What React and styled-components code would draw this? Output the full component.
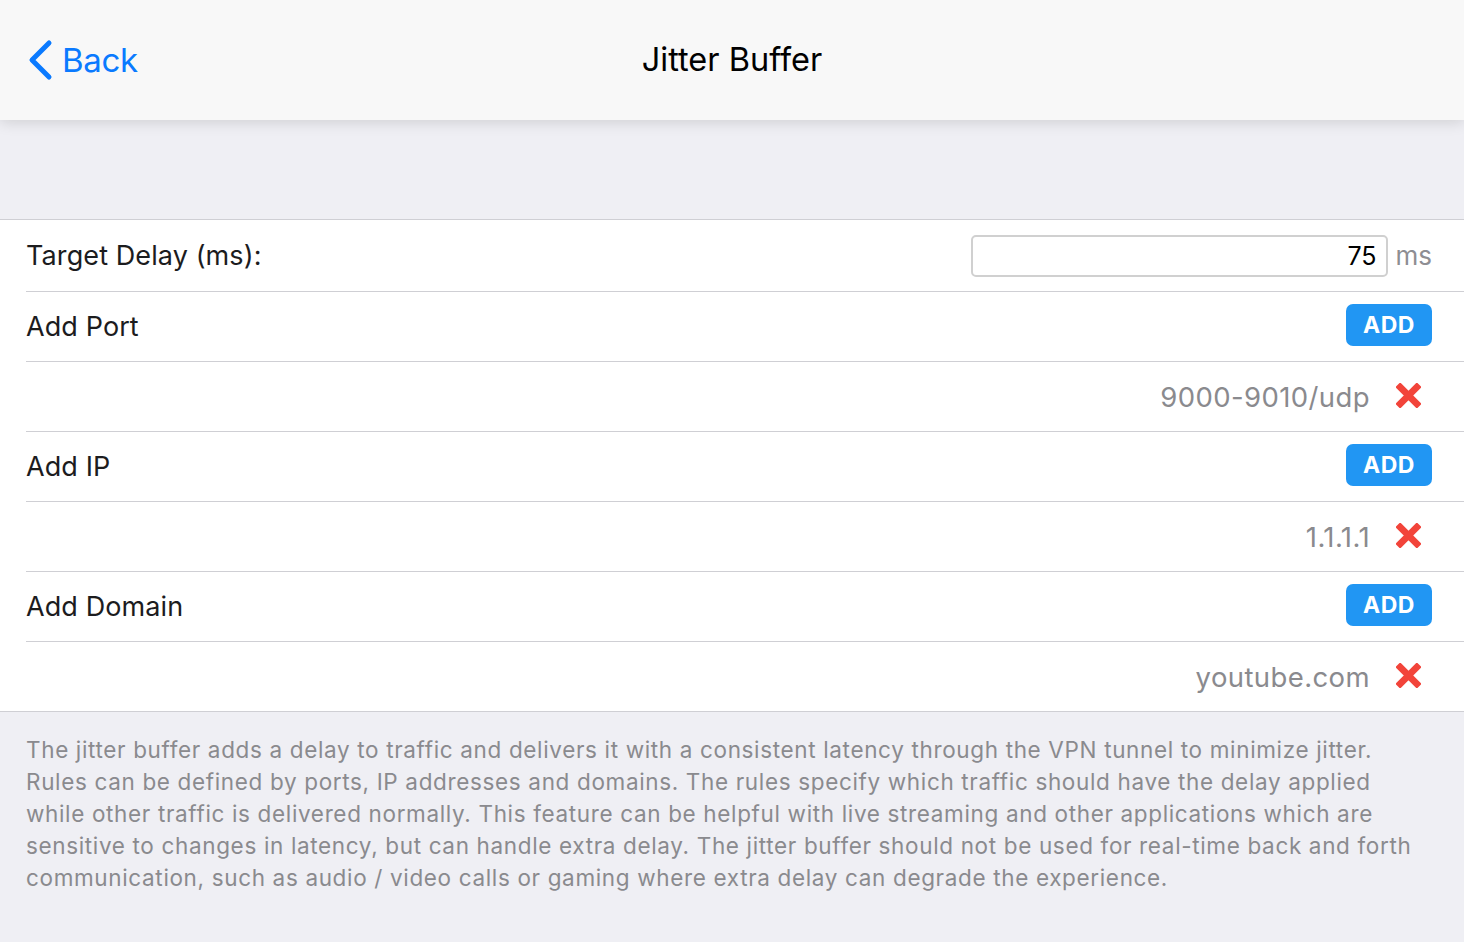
import React from 'react'
import styled, { createGlobalStyle } from 'styled-components'

const GlobalStyle = createGlobalStyle`
  html, body {
    margin: 0;
    padding: 0;
    background: #efeff4;
    font-family: Inter, "Liberation Sans", sans-serif;
    -webkit-font-smoothing: antialiased;
  }
`

const Page = styled.div`
  min-height: 942px;
  background: #efeff4;
`

const Header = styled.header`
  position: relative;
  z-index: 2;
  height: 120px;
  background: #f8f8f8;
  box-shadow: 0 2px 14px rgba(0, 0, 0, 0.14);
  display: grid;
  grid-template-columns: 1fr auto 1fr;
  align-items: center;
  padding: 0 26px;
`

const BackButton = styled.div`
  display: flex;
  align-items: center;
  gap: 8px;
  color: #0a7aff;
  font-size: 33px;
  font-weight: 400;
  letter-spacing: -0.3px;
`

const Title = styled.h1`
  margin: 0 0 2px;
  font-size: 32.5px;
  font-weight: 400;
  color: #000;
  letter-spacing: 0;
`

const Spacer = styled.div`
  height: 99px;
`

const List = styled.section`
  background: #fff;
  border-top: 1px solid #cfcfd4;
  border-bottom: 1px solid #cfcfd4;
`

const Row = styled.div`
  height: ${p => (p.first ? 71 : 69)}px;
  margin-left: 26px;
  padding-right: 32px;
  display: flex;
  align-items: center;
  justify-content: space-between;
  border-bottom: ${p => (p.last ? 'none' : '1px solid #cfcfd4')};
`

const Label = styled.span`
  font-size: 27px;
  color: #1c1c1e;
  letter-spacing: 0.1px;
  margin-top: -1px;
`

const InputGroup = styled.div`
  display: flex;
  align-items: center;
  gap: 8px;
`

const NumberBox = styled.div`
  box-sizing: border-box;
  width: 417px;
  height: 42px;
  border: 2px solid #d0d0d0;
  border-radius: 5px;
  display: flex;
  align-items: center;
  justify-content: flex-end;
  padding-right: 9px;
  font-size: 25px;
  color: #000;
`

const Unit = styled.span`
  font-size: 26px;
  color: #8e8e93;
`

const AddButton = styled.button`
  width: 86px;
  height: 42px;
  margin-top: -3px;
  border: none;
  border-radius: 7px;
  background: #2196f3;
  color: #fff;
  font-family: Inter, "Liberation Sans", sans-serif;
  font-size: 23px;
  font-weight: 700;
  letter-spacing: 0.5px;
  padding: 0;
`

const EntryRow = styled(Row)`
  justify-content: flex-end;
  gap: 26px;
  padding-right: 43px;
`

const Value = styled.span`
  font-size: 27.5px;
  color: #8a8a8e;
  letter-spacing: 0.4px;
`

const Remove = styled.svg`
  width: 25px;
  height: 25px;
  display: block;
  margin-top: -2px;
`

const Footer = styled.p`
  margin: 0;
  padding: 22px 10px 0 26px;
  font-size: 22.5px;
  line-height: 32px;
  color: #8a8a8e;
  letter-spacing: 0.65px;
`

const Cross = () => (
  <Remove viewBox="0 0 24 24">
    <path
      d="M4 4 L20 20 M20 4 L4 20"
      stroke="#f2443a"
      strokeWidth="6.5"
      strokeLinecap="square"
      fill="none"
    />
  </Remove>
)

const sections = [
  { label: 'Add Port', value: '9000-9010/udp' },
  { label: 'Add IP', value: '1.1.1.1' },
  { label: 'Add Domain', value: 'youtube.com' },
]

const footerLines = [
  'The jitter buffer adds a delay to traffic and delivers it with a consistent latency through the VPN tunnel to minimize jitter.',
  'Rules can be defined by ports, IP addresses and domains. The rules specify which traffic should have the delay applied',
  'while other traffic is delivered normally. This feature can be helpful with live streaming and other applications which are',
  'sensitive to changes in latency, but can handle extra delay. The jitter buffer should not be used for real-time back and forth',
  'communication, such as audio / video calls or gaming where extra delay can degrade the experience.',
]

export default function App() {
  return (
    <Page>
      <GlobalStyle />
      <Header>
        <BackButton>
          <svg width="28" height="42" viewBox="0 0 28 42">
            <path
              d="M23 4 L6 21 L23 38"
              stroke="#0a7aff"
              strokeWidth="5"
              strokeLinecap="round"
              strokeLinejoin="round"
              fill="none"
            />
          </svg>
          Back
        </BackButton>
        <Title>Jitter Buffer</Title>
        <div />
      </Header>
      <Spacer />
      <List>
        <Row first>
          <Label>Target Delay (ms):</Label>
          <InputGroup>
            <NumberBox>75</NumberBox>
            <Unit>ms</Unit>
          </InputGroup>
        </Row>
        {sections.map((s, i) => (
          <React.Fragment key={s.label}>
            <Row>
              <Label>{s.label}</Label>
              <AddButton>ADD</AddButton>
            </Row>
            <EntryRow last={i === sections.length - 1}>
              <Value>{s.value}</Value>
              <Cross />
            </EntryRow>
          </React.Fragment>
        ))}
      </List>
      <Footer>
        {footerLines.map((line, i) => (
          <React.Fragment key={i}>
            {line}
            {i < footerLines.length - 1 && <br />}
          </React.Fragment>
        ))}
      </Footer>
    </Page>
  )
}
